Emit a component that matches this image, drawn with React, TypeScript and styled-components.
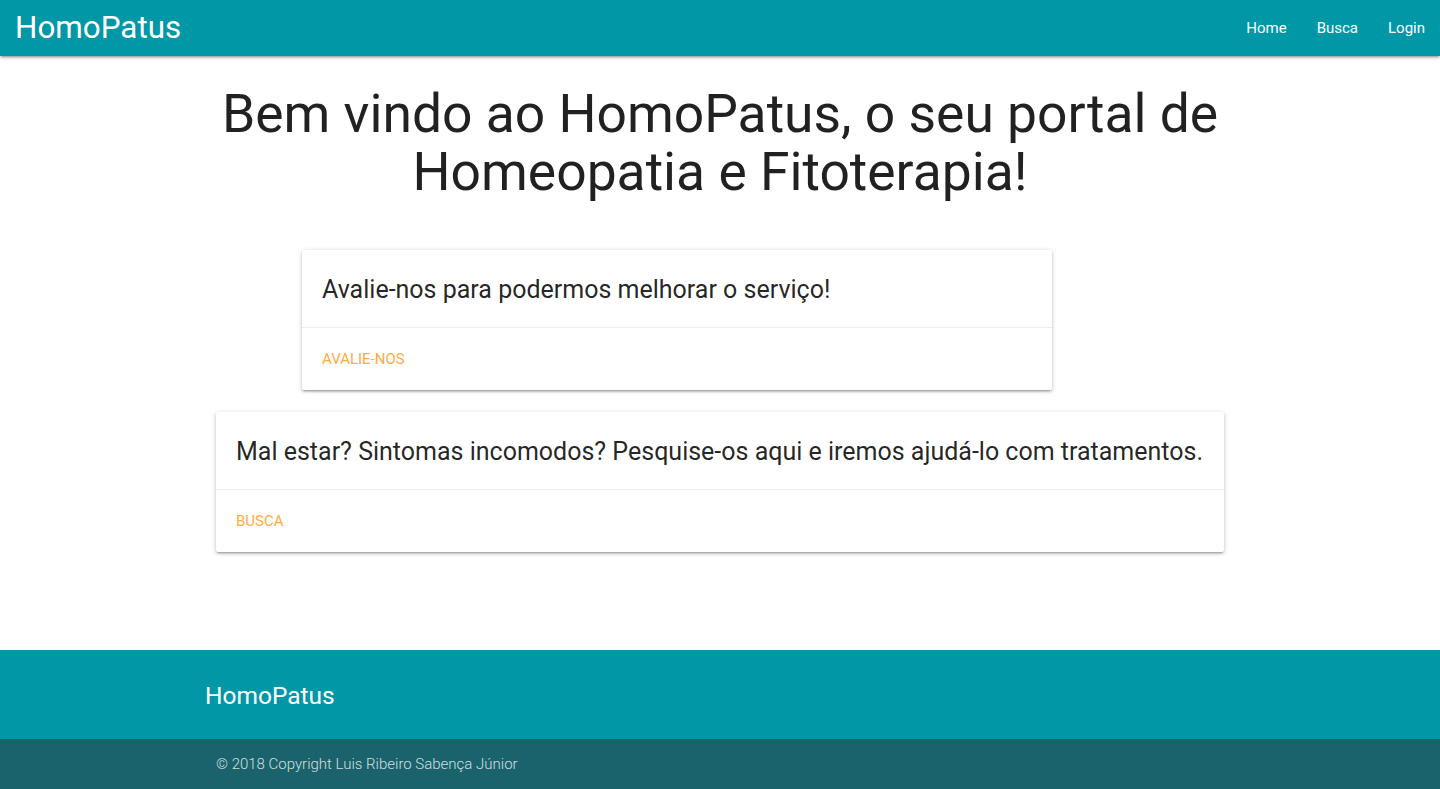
import React from "react";
import styled, { createGlobalStyle } from "styled-components";

const Global = createGlobalStyle`
  html, body { margin: 0; padding: 0; }
  body {
    font-family: Roboto, "Noto Sans", "Liberation Sans", sans-serif;
    background: #ffffff;
    color: rgba(0,0,0,0.87);
    -webkit-font-smoothing: antialiased;
  }
  * { box-sizing: border-box; }
`;

const shadow =
  "0 2px 2px 0 rgba(0,0,0,0.14), 0 3px 1px -2px rgba(0,0,0,0.12), 0 1px 5px 0 rgba(0,0,0,0.2)";

const Nav = styled.nav`
  height: 56px;
  background: #0097a7;
  box-shadow: ${shadow};
  display: flex;
  align-items: center;
  justify-content: space-between;
  color: #fff;
  position: relative;
  z-index: 2;
`;

const Brand = styled.a`
  font-size: 31.4px;
  line-height: 56px;
  padding-left: 15px;
  color: #fff;
  text-decoration: none;
`;

const NavLinks = styled.ul`
  display: flex;
  list-style: none;
  margin: 0;
  padding: 0;
`;

const NavLink = styled.a`
  display: block;
  padding: 0 15px;
  font-size: 15px;
  line-height: 56px;
  color: #fff;
  text-decoration: none;
`;

const Main = styled.main`
  padding: 29px 0 98px;
`;

const Heading = styled.h2`
  margin: 0 auto 49px;
  width: 1008px;
  text-align: center;
  font-weight: 400;
  font-size: 53.4px;
  line-height: 58px;
  color: rgba(0,0,0,0.87);
`;

const Cards = styled.div`
  width: 1008px;
  margin: 0 auto;
  display: flex;
  flex-direction: column;
  gap: 22px;
`;

const Card = styled.div<{ $width?: number; $offset?: number }>`
  background: #fff;
  border-radius: 2px;
  box-shadow: ${shadow};
  width: ${(p) => (p.$width ? `${p.$width}px` : "100%")};
  margin-left: ${(p) => p.$offset ?? 0}px;
`;

const CardContent = styled.div`
  padding: 24px 20px 21px 20px;
`;

const CardTitle = styled.span`
  display: block;
  font-size: 25px;
  line-height: 32px;
  font-weight: 400;
  color: rgba(0,0,0,0.87);
`;

const CardAction = styled.div`
  border-top: 1px solid rgba(160,160,160,0.2);
  padding: 20px 20px;
`;

const ActionLink = styled.a`
  font-size: 15px;
  line-height: 22px;
  color: #ffab40;
  text-transform: uppercase;
  text-decoration: none;
  display: inline-block;
`;

const Footer = styled.footer`
  background: #0097a7;
  color: #fff;
`;

const FooterTop = styled.div`
  width: 1008px;
  margin: 0 auto;
  height: 89px;
  display: flex;
  align-items: center;
`;

const FooterTitle = styled.h5`
  margin: 0 0 0 -11px;
  font-size: 24.5px;
  font-weight: 400;
  line-height: 30px;
  padding-top: 2px;
`;

const Copyright = styled.div`
  background: #1b636c;
  height: 50px;
`;

const CopyrightInner = styled.div`
  width: 1008px;
  margin: 0 auto;
  height: 50px;
  display: flex;
  align-items: center;
  font-size: 15px;
  color: rgba(255,255,255,0.8);
  font-weight: 300;
`;

export default function App() {
  return (
    <>
      <Global />
      <Nav>
        <Brand href="#">HomoPatus</Brand>
        <NavLinks>
          <li><NavLink href="#">Home</NavLink></li>
          <li><NavLink href="#">Busca</NavLink></li>
          <li><NavLink href="#">Login</NavLink></li>
        </NavLinks>
      </Nav>
      <Main>
        <Heading>Bem vindo ao HomoPatus, o seu portal de Homeopatia e Fitoterapia!</Heading>
        <Cards>
          <Card $width={750} $offset={86}>
            <CardContent>
              <CardTitle>Avalie-nos para podermos melhorar o serviço!</CardTitle>
            </CardContent>
            <CardAction>
              <ActionLink href="#">Avalie-nos</ActionLink>
            </CardAction>
          </Card>
          <Card>
            <CardContent>
              <CardTitle>Mal estar? Sintomas incomodos? Pesquise-os aqui e iremos ajudá-lo com tratamentos.</CardTitle>
            </CardContent>
            <CardAction>
              <ActionLink href="#">Busca</ActionLink>
            </CardAction>
          </Card>
        </Cards>
      </Main>
      <Footer>
        <FooterTop>
          <FooterTitle>HomoPatus</FooterTitle>
        </FooterTop>
        <Copyright>
          <CopyrightInner>© 2018 Copyright Luis Ribeiro Sabença Júnior</CopyrightInner>
        </Copyright>
      </Footer>
    </>
  );
}
